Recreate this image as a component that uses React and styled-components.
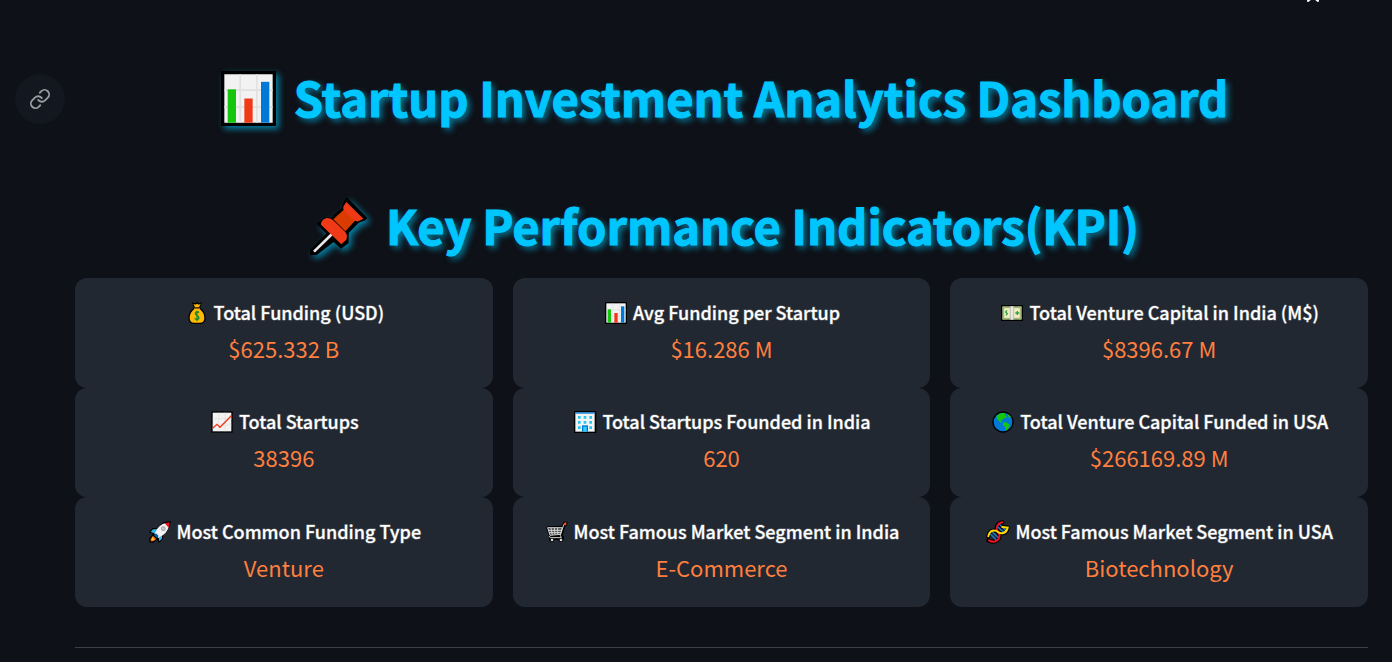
import React from "react";
import styled, { createGlobalStyle } from "styled-components";

const GlobalStyle = createGlobalStyle`
  *, *::before, *::after { box-sizing: border-box; }
  body {
    margin: 0;
    min-height: 100vh;
    overflow: hidden;
    background: #0e1117;
    color: #ffffff;
    font-family: "Source Sans Pro", "Noto Sans CJK JP", "Noto Sans", sans-serif;
  }
`;

const Page = styled.main`
  position: relative;
  padding: 59px 24px 0 75px;
`;

const StarButton = styled.button`
  position: absolute;
  top: -16px;
  right: 70px;
  width: 18px;
  height: 18px;
  padding: 0;
  border: 0;
  background: none;
  color: #fafafa;
  svg { display: block; }
`;

const Header = styled.header`
  position: relative;
`;

const AnchorLink = styled.a`
  position: absolute;
  left: -60px;
  top: 15px;
  display: flex;
  align-items: center;
  justify-content: center;
  width: 50px;
  height: 50px;
  border-radius: 50%;
  background: #13171f;
  color: #9a9ca1;
`;

const Heading = styled.h1`
  display: flex;
  align-items: center;
  justify-content: center;
  gap: 18px;
  margin: ${(p) => (p.$section ? "40px 0 3px" : "0")};
  padding-left: 6px;
  height: ${(p) => (p.$section ? "98px" : "78px")};
  font-size: 47px;
  line-height: 62px;
  font-weight: 700;
  color: #00c6ff;
  -webkit-text-stroke: 1px #00c6ff;
  text-shadow: 3px 3px 6px rgba(0, 198, 255, 0.6);
  white-space: nowrap;
  span { padding-bottom: 3px; }
  svg {
    flex: none;
    overflow: visible;
    filter: drop-shadow(3px 3px 3px rgba(0, 198, 255, 0.6));
  }
`;

const Grid = styled.section`
  display: grid;
  grid-template-columns: repeat(3, 1fr);
  grid-auto-rows: 1fr;
  column-gap: 20px;
  min-height: 329px;
`;

const Card = styled.article`
  display: flex;
  flex-direction: column;
  align-items: center;
  justify-content: center;
  gap: 2px;
  padding-bottom: 2px;
  border-radius: 12px;
  background: #222831;
  text-align: center;
`;

const Label = styled.h2`
  display: flex;
  align-items: center;
  gap: 6px;
  margin: 0;
  padding-left: 2px;
  height: 30px;
  font-size: 18px;
  line-height: 28px;
  font-weight: 500;
  -webkit-text-stroke: 1px rgba(255, 255, 255, 0.35);
  span { padding-bottom: 2px; }
  svg { flex: none; overflow: visible; }
`;

const Value = styled.p`
  margin: 0;
  font-size: 22px;
  line-height: 36px;
  color: #ff7f3f;
`;

const Divider = styled.hr`
  margin: 40px 0 0;
  border: 0;
  border-top: 1px solid #3c3f45;
`;

const Emoji = ({ size = 22, children }) => (
  <svg width={size} height={size} viewBox="0 0 66 66" aria-hidden="true">
    {children}
  </svg>
);

const BarChart = ({ size }) => (
  <Emoji size={size}>
    <path d="M0 0H66V66H0Z" fill="#000" />
    <path d="M4 4H62V62H4Z" fill="#f2f2f2" />
    <path d="M23 4V62M43 4V62M4 23H62M4 43H62" stroke="#e1e1e1" strokeWidth="2" />
    <path d="M8 22H18V62H8Z" fill="#16c60c" />
    <path d="M28 33H38V62H28Z" fill="#f03a17" />
    <path d="M48 13H58V62H48Z" fill="#0078d7" />
  </Emoji>
);

const Pushpin = () => (
  <svg width="58" height="58" viewBox="0 0 174 174" aria-hidden="true">
    <path d="M0 174V158L49 110L33 94L20 80L43 62Q52 58 63 62L96 31L101 13L110 0L172 63L166 70L146 77L116 108V138L93 155L71 135L20 174Z" fill="#000" />
    <path d="M66 111L12 164" stroke="#e8e8ec" strokeWidth="8" />
    <path d="M70 67L104 36L137 69L106 103Z" fill="#da3b01" />
    <path d="M101 27L109 15L160 65L145 73Q136 74 129 67L104 42Q97 35 101 27Z" fill="#f03a17" />
    <path d="M33 79Q37 66 50 63Q61 61 72 72L102 101Q115 112 109 128L94 142L33 83Z" fill="#f03a17" />
  </svg>
);

const MoneyBag = () => (
  <Emoji>
    <path d="M18 1L27 4L33 0L39 4L48 1L43 17Q59 29 59 48Q59 65 43 66H23Q7 65 7 48Q7 29 23 17Z" fill="#000" />
    <path d="M22 5L28 8L33 5L38 8L44 5L39 16H27Z" fill="#ffb900" />
    <path d="M25 21H41Q55 32 55 47Q55 62 42 62H24Q11 62 11 47Q11 32 25 21Z" fill="#ffb900" />
    <path d="M24 17H42V21H24Z" fill="#8e562e" />
    <path d="M39 32Q36 28 31 30Q25 33 31 39L36 43Q42 49 35 52Q30 54 26 49M33 26V57" fill="none" stroke="#10893e" strokeWidth="4" />
  </Emoji>
);

const Banknote = () => (
  <Emoji>
    <path d="M0 9H66V57H0Z" fill="#000" />
    <path d="M4 13H62V53H4Z" fill="#b4c98c" />
    <path d="M8 17H58V49H8Z" fill="#f1efbd" stroke="#8d9d65" strokeWidth="2" />
    <path d="M5 14H14L5 22ZM52 14H61V22ZM5 52V44L14 52ZM61 52V44L52 52Z" fill="#9bb773" />
    <path d="M18 25L14 30L19 35L15 40M49 27V39M43 33H55" fill="none" stroke="#2ea043" strokeWidth="4" />
    <path d="M28 13H38V53H28Z" fill="#e8e8e8" />
    <path d="M28 13V53M38 13V53" stroke="#a7aaa3" strokeWidth="2" />
  </Emoji>
);

const GrowthChart = () => (
  <Emoji>
    <path d="M1 1H65V65H1Z" fill="#000" />
    <path d="M5 5H61V61H5Z" fill="#f2f2f2" />
    <path d="M23 5V61M42 5V61M5 23H61M5 42H61" stroke="#dedede" strokeWidth="2" />
    <path d="M5 52L18 40L27 49L61 14" fill="none" stroke="#f03a17" strokeWidth="4" />
  </Emoji>
);

const Office = () => (
  <Emoji>
    <path d="M0 0H67V66H0Z" fill="#000" />
    <path d="M4 4H62V62H4Z" fill="#f2f2f2" />
    <path d="M4 4H62V8H4Z" fill="#0078d7" />
    <path d="M12 15H20V23H12ZM29 15H37V23H29ZM46 15H54V23H46ZM12 30H20V38H12ZM29 30H37V38H29ZM46 30H54V38H46ZM12 46H20V54H12ZM46 46H54V54H46Z" fill="#28c6ee" />
    <path d="M24 43H42V62H24Z" fill="#0078d7" />
    <path d="M28 47H38V62H28Z" fill="#31d2f7" />
  </Emoji>
);

const Globe = () => (
  <Emoji>
    <circle cx="33" cy="33" r="32" fill="#000" />
    <circle cx="33" cy="33" r="28" fill="#0078d7" />
    <path d="M17 12Q24 5 37 6L43 10L38 12L45 17L40 22L34 22L30 29L25 27L31 35L28 36L18 28L13 18ZM33 35L43 34L54 42L47 55L42 59L39 48L33 42ZM47 8L57 18L53 21L47 15Z" fill="#16c60c" />
  </Emoji>
);

const Rocket = () => (
  <Emoji>
    <path d="M66 0L46 3Q34 8 24 22L10 21L0 35L13 39L8 44L1 52V64L14 65L24 55L29 66L42 55L43 42Q61 29 66 0Z" fill="#000" />
    <path d="M12 44L22 54L13 61H5V53Z" fill="#f7630c" />
    <path d="M10 48L18 56L7 59Z" fill="#ffc83d" />
    <path d="M12 25H25L16 37L5 33ZM29 50L39 41V53L31 61Z" fill="#31b7e9" />
    <path d="M16 38Q29 9 52 6L60 14Q57 36 28 51Z" fill="#f2f2f2" />
    <path d="M47 7L62 4L59 20Z" fill="#e81224" />
    <circle cx="43" cy="23" r="7" fill="#9aa0a6" />
    <circle cx="43" cy="23" r="4" fill="#c8ccd0" />
    <path d="M21 37L29 45L24 51L15 42Z" fill="#0063b1" />
  </Emoji>
);

const Cart = () => (
  <Emoji>
    <path d="M3 16L48 14L53 2H64V13L57 17L50 45H54V54L49 63H41L38 57H25L22 63H13L9 56V45L1 23Z" fill="#000" />
    <path d="M5 21H49L43 39L12 42Z" fill="#4a4c50" />
    <path d="M5 20H49L43 40L12 43ZM15 21L19 42M25 21L27 41M35 21V40M7 28H47M10 35H45M57 7L53 12L43 43L46 50H13L10 45" fill="none" stroke="#d4d4d4" strokeWidth="3" />
    <circle cx="18" cy="57" r="4" fill="#d8d8d8" />
    <circle cx="45" cy="57" r="4" fill="#d8d8d8" />
    <path d="M53 6L61 4V12L55 13Z" fill="#f05035" />
  </Emoji>
);

const Dna = () => (
  <Emoji>
    <g fill="none" strokeLinecap="round">
      <path d="M4 46C8 26 24 26 33 33C42 40 58 38 62 20M4 58Q12 62 20 62C40 58 40 42 33 33C26 24 28 8 46 4M62 20L44 18" stroke="#000" strokeWidth="13" />
      <path d="M11 40L28 57M17 34L34 50M32 17L49 33M37 10L56 28" stroke="#1c7fd0" strokeWidth="4" />
      <path d="M6 58Q12 62 20 62C40 58 40 42 33 33C26 24 28 8 46 4" stroke="#e81224" strokeWidth="6" />
      <path d="M4 46C8 26 24 26 33 33C42 40 58 38 62 20L46 18" stroke="#ffdc00" strokeWidth="6" />
    </g>
  </Emoji>
);

const kpis = [
  { icon: MoneyBag, label: "Total Funding (USD)", value: "$625.332 B" },
  { icon: BarChart, label: "Avg Funding per Startup", value: "$16.286 M" },
  { icon: Banknote, label: "Total Venture Capital in India (M$)", value: "$8396.67 M" },
  { icon: GrowthChart, label: "Total Startups", value: "38396" },
  { icon: Office, label: "Total Startups Founded in India", value: "620" },
  { icon: Globe, label: "Total Venture Capital Funded in USA", value: "$266169.89 M" },
  { icon: Rocket, label: "Most Common Funding Type", value: "Venture" },
  { icon: Cart, label: "Most Famous Market Segment in India", value: "E-Commerce" },
  { icon: Dna, label: "Most Famous Market Segment in USA", value: "Biotechnology" },
];

export default function App() {
  return (
    <>
      <GlobalStyle />
      <Page>
        <StarButton type="button" aria-label="Star">
          <svg width="18" height="18" viewBox="0 0 18 18" fill="none" stroke="currentColor" strokeWidth="2" strokeLinejoin="round">
            <path d="M9 1L11 6L17 7L13 11L14 17L9 13L4 17L5 11L1 7L7 6Z" />
          </svg>
        </StarButton>
        <Header id="dashboard">
          <AnchorLink href="#dashboard" aria-label="Link to heading">
            <svg width="22" height="22" viewBox="0 0 24 24" fill="none" stroke="currentColor" strokeWidth="2" strokeLinecap="round" strokeLinejoin="round">
              <path d="M10 13a5 5 0 0 0 7.54.54l3-3a5 5 0 0 0-7.07-7.07l-1.72 1.71" />
              <path d="M14 11a5 5 0 0 0-7.54-.54l-3 3a5 5 0 0 0 7.07 7.07l1.71-1.71" />
            </svg>
          </AnchorLink>
          <Heading>
            <BarChart size={55} />
            <span>Startup Investment Analytics Dashboard</span>
          </Heading>
        </Header>
        <Heading as="h2" $section>
          <Pushpin />
          <span>Key Performance Indicators(KPI)</span>
        </Heading>
        <Grid>
          {kpis.map(({ icon: Icon, label, value }) => (
            <Card key={label}>
              <Label>
                <Icon />
                <span>{label}</span>
              </Label>
              <Value>{value}</Value>
            </Card>
          ))}
        </Grid>
        <Divider />
      </Page>
    </>
  );
}
